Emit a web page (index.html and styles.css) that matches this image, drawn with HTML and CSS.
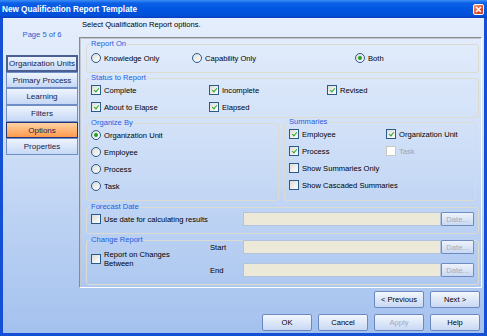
FILE: index.html
```html
<!DOCTYPE html>
<html lang="en">
<head>
    <meta charset="UTF-8">
    <title>New Qualification Report Template</title>
    <link rel="stylesheet" href="styles.css">
</head>
<body>
    <div class="window">
        <div class="titlebar">
            <span>New Qualification Report Template</span>
            <span class="close">
                <svg width="7" height="7" viewBox="0 0 7 7"><path d="M1 1 L6 6 M6 1 L1 6" stroke="#fff" stroke-width="1.6"/></svg>
            </span>
        </div>

        <div class="client">
            <div class="side">
                <p class="page-no">Page 5 of 6</p>
                <div class="tabs">
                    <div class="tab focus">Organization Units</div>
                    <div class="tab">Primary Process</div>
                    <div class="tab">Learning</div>
                    <div class="tab">Filters</div>
                    <div class="tab active">Options</div>
                    <div class="tab">Properties</div>
                </div>
            </div>

            <div class="main">
                <p class="intro">Select Qualification Report options.</p>

                <div class="panel">
                    <fieldset class="grp report-on">
                        <legend>Report On</legend>
                        <div class="row">
                            <label class="opt w101"><span class="rb"></span>Knowledge Only</label>
                            <label class="opt w163"><span class="rb"></span>Capability Only</label>
                            <label class="opt"><span class="rb on"></span>Both</label>
                        </div>
                    </fieldset>

                    <fieldset class="grp status">
                        <legend>Status to Report</legend>
                        <div class="grid3">
                            <label class="opt"><span class="cb on"></span>Complete</label>
                            <label class="opt"><span class="cb on"></span>Incomplete</label>
                            <label class="opt"><span class="cb on"></span>Revised</label>
                            <label class="opt"><span class="cb on"></span>About to Elapse</label>
                            <label class="opt"><span class="cb on"></span>Elapsed</label>
                        </div>
                    </fieldset>

                    <div class="pair">
                        <fieldset class="grp organize">
                            <legend>Organize By</legend>
                            <div class="list">
                                <label class="opt"><span class="rb on"></span>Organization Unit</label>
                                <label class="opt"><span class="rb"></span>Employee</label>
                                <label class="opt"><span class="rb"></span>Process</label>
                                <label class="opt"><span class="rb"></span>Task</label>
                            </div>
                        </fieldset>
                        <fieldset class="grp summaries">
                            <legend>Summaries</legend>
                            <div class="grid2">
                                <label class="opt"><span class="cb on"></span>Employee</label>
                                <label class="opt"><span class="cb on"></span>Organization Unit</label>
                                <label class="opt"><span class="cb on"></span>Process</label>
                                <label class="opt disabled"><span class="cb"></span>Task</label>
                                <label class="opt span2"><span class="cb"></span>Show Summaries Only</label>
                                <label class="opt span2"><span class="cb"></span>Show Cascaded Summaries</label>
                            </div>
                        </fieldset>
                    </div>

                    <fieldset class="grp forecast">
                        <legend>Forecast Date</legend>
                        <div class="date-row">
                            <label class="opt"><span class="cb"></span>Use date for calculating results</label>
                            <span class="field"></span>
                            <span class="date-btn">Date...</span>
                        </div>
                    </fieldset>

                    <fieldset class="grp change">
                        <legend>Change Report</legend>
                        <div class="change-grid">
                            <label class="opt two-line"><span class="cb"></span><span>Report on Changes<br>Between</span></label>
                            <span class="lbl">Start</span>
                            <span class="field"></span>
                            <span class="date-btn">Date...</span>
                            <span class="lbl">End</span>
                            <span class="field"></span>
                            <span class="date-btn">Date...</span>
                        </div>
                    </fieldset>
                </div>

                <div class="nav-row">
                    <button class="btn">&lt; Previous</button>
                    <button class="btn">Next &gt;</button>
                </div>
                <div class="action-row">
                    <button class="btn">OK</button>
                    <button class="btn">Cancel</button>
                    <button class="btn" disabled>Apply</button>
                    <button class="btn">Help</button>
                </div>
            </div>
        </div>
    </div>
</body>
</html>
```

FILE: styles.css
```css
* {
    margin: 0;
    padding: 0;
    box-sizing: border-box;
}

body {
    font-family: "Liberation Sans", Arial, sans-serif;
    font-size: 7.6px;
    color: #000;
    background: #fff;
}

.window {
    width: 487px;
    height: 336px;
    display: flex;
    flex-direction: column;
    background: #1450d6;
}

.titlebar {
    height: 18px;
    display: flex;
    align-items: center;
    justify-content: space-between;
    padding: 0 3px 0 2px;
    color: #fff;
    font-weight: bold;
    font-size: 8.2px;
    background: linear-gradient(#3d8df5 0%, #0a5fe6 18%, #0055e0 55%, #0150da 85%, #0a3fbe 100%);
}

.close {
    width: 11px;
    height: 11px;
    display: flex;
    align-items: center;
    justify-content: center;
    border: 1px solid #fff;
    border-radius: 2px;
    background: linear-gradient(135deg, #f59a78, #e2502c 55%, #c8381a);
}

.client {
    flex: 1;
    display: flex;
    margin: 0 3px 3px 3px;
    background: linear-gradient(#e5eefc 0%, #d2e1f8 35%, #bcd2f3 65%, #a4c1ee 100%);
}

.side {
    width: 76px;
    padding-left: 3px;
}

.page-no {
    width: 72px;
    margin-top: 10px;
    line-height: 14px;
    text-align: center;
    color: #2a5fd0;
}

.tabs {
    margin-top: 13px;
    width: 72px;
}

.tab {
    height: 16.7px;
    display: flex;
    align-items: center;
    justify-content: center;
    font-size: 8px;
    color: #16224e;
    border: 1px solid #6f8dc6;
    background: linear-gradient(#eef4fd, #c6d8f5);
}

.tab.focus {
    border: 2px solid #4a5f94;
}

.tab.active {
    border: 1px solid #26357a;
    background: linear-gradient(#ffd2a4, #ff9a4c);
}

.main {
    flex: 1;
    display: flex;
    flex-direction: column;
}

.intro {
    height: 19px;
    line-height: 14px;
    padding-left: 3px;
}

.panel {
    height: 251px;
    margin-right: 2px;
    padding: 1px 2px 0 6px;
    border: 1px solid;
    border-color: #8a8a8a #ffffff #ffffff #8a8a8a;
    box-shadow: inset 1px 1px 0 #c3c7cf;
}

.grp {
    min-width: 0;
    border: 1px solid #dcdbd0;
    border-radius: 3px;
    padding: 0 4px 7px 4px;
}

.grp legend {
    padding: 0 1px;
    margin-left: -1px;
    line-height: 10px;
    color: #1f5de0;
}

.opt {
    display: flex;
    align-items: center;
    gap: 3px;
    height: 14px;
    white-space: nowrap;
}

.opt.disabled {
    color: #a3a3a3;
}

.w101 { width: 101px; }
.w163 { width: 163px; }

.row {
    display: flex;
    margin-top: 2px;
}

.report-on {
    padding-bottom: 7px;
}

.grid3 {
    display: grid;
    grid-template-columns: 118px 118px auto;
    row-gap: 3px;
}

.status {
    padding-bottom: 3px;
}

.pair {
    display: flex;
    gap: 5px;
}

.organize {
    width: 193px;
}

.summaries {
    width: 192px;
    margin-top: -1px;
}

.list {
    display: flex;
    flex-direction: column;
    gap: 3px;
}

.grid2 {
    display: grid;
    grid-template-columns: 97px auto;
    row-gap: 3px;
}

.span2 {
    grid-column: span 2;
}

.forecast {
    margin-top: 1px;
}

.date-row {
    display: grid;
    grid-template-columns: 152px 198px 33px;
}

.change {
    margin-top: 1px;
}

.change-grid {
    display: grid;
    grid-template-columns: 119px 33px 198px 33px;
    grid-template-rows: 14px 14px;
    row-gap: 9px;
    margin-top: -5px;
}

.two-line {
    grid-row: span 2;
    align-self: center;
    height: auto;
    line-height: 9px;
}

.lbl {
    display: flex;
    align-items: center;
}

.field {
    height: 14px;
    background: #ece9d8;
    border: 1px solid #b4c3dc;
}

.date-btn {
    height: 14px;
    display: flex;
    align-items: center;
    justify-content: center;
    color: #a3acbc;
    border: 1px solid #6f8cc2;
    border-radius: 1px;
    background: linear-gradient(#eef3fc, #c9d8f2);
}

.cb, .rb {
    flex: none;
    width: 10px;
    height: 10px;
    border: 1px solid #2a5a8c;
    background: linear-gradient(135deg, #dcdcd6, #ffffff);
    position: relative;
}

.rb {
    border-radius: 50%;
}

.cb.on::after {
    content: "";
    position: absolute;
    left: 2.5px;
    top: 1px;
    width: 2px;
    height: 4px;
    border: solid #2aa82a;
    border-width: 0 1.5px 1.5px 0;
    transform: rotate(40deg);
}

.rb.on::after {
    content: "";
    position: absolute;
    left: 2px;
    top: 2px;
    width: 4px;
    height: 4px;
    border-radius: 50%;
    background: #21a121;
}

.disabled .cb {
    border-color: #cac8bb;
    background: #fff;
}

.nav-row, .action-row {
    display: flex;
    justify-content: flex-end;
    gap: 6px;
    padding-right: 4px;
}

.nav-row {
    margin-top: 3px;
}

.action-row {
    margin-top: 6px;
}

.btn {
    width: 50px;
    height: 17px;
    font-family: "Liberation Sans", Arial, sans-serif;
    font-size: 7.6px;
    color: #000;
    border: 1px solid #6b89c0;
    border-radius: 2px;
    background: linear-gradient(#f3f7fe, #c8d8f3);
}

.btn:disabled {
    color: #a0a9ba;
}
```
